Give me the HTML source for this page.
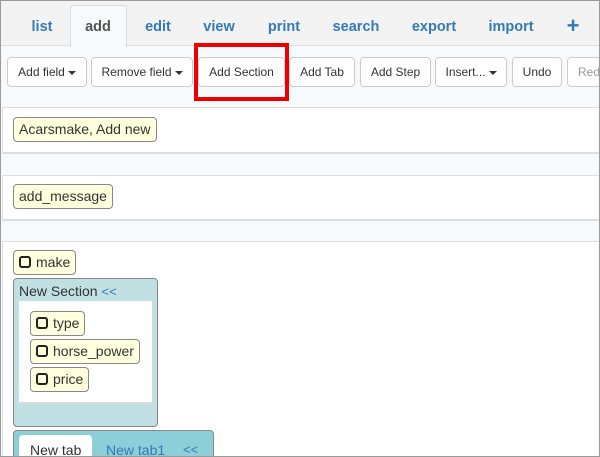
<!DOCTYPE html><html style="overflow:hidden;width:600px;height:457px"><head><style>
*{box-sizing:border-box;margin:0;padding:0}
body{width:600px;height:457px;overflow:hidden;font-family:"Liberation Sans",sans-serif;font-size:13px;color:#333;position:relative;background:#f7fafd}
.frame{position:absolute;left:0;top:0;width:600px;height:457px;border:1px solid #9a9a9a;pointer-events:none;z-index:10}
.a{position:absolute}
.tabbar{left:0;top:0;width:600px;height:46px;background:#f3f3f3;border-bottom:1px solid #ddd}
.t{position:absolute;top:19px;font-weight:bold;font-size:14.5px;color:#337ab7;transform:translateX(-50%)}
.act{left:70px;top:5px;width:57px;height:42px;background:#f7fafd;border:1px solid #ddd;border-bottom:none;border-radius:4px 4px 0 0}
.b{position:absolute;top:57px;height:30px;border:1px solid #ccc;border-radius:4px;background:#fff;font-size:12px;line-height:28px;text-align:center;color:#333}
.c{display:inline-block;width:0;height:0;border-left:4px solid transparent;border-right:4px solid transparent;border-top:4px solid #333;vertical-align:middle;margin-left:3px}
.p{position:absolute;left:2px;width:598px;background:#fff;border-top:1px solid #ddd;border-left:1px solid #ddd;border-bottom:2px solid #ddd}
.f{position:absolute;height:25px;background:#ffffdd;border:1px solid #888;border-radius:4px;font-size:14px;line-height:23px;padding:0 5px;white-space:nowrap}
.cb{display:inline-block;width:12px;height:12px;border:2.5px solid #222;border-radius:3px;vertical-align:-1px;margin-right:5px}
</style></head><body>
<div class="a tabbar"></div>
<div class="a act"></div>
<span class="t" style="left:42px">list</span>
<span class="t" style="left:98px;color:#555">add</span>
<span class="t" style="left:158px">edit</span>
<span class="t" style="left:219px">view</span>
<span class="t" style="left:284px">print</span>
<span class="t" style="left:356px">search</span>
<span class="t" style="left:434px">export</span>
<span class="t" style="left:511px">import</span>
<span class="t" style="left:573px;top:13px;font-size:22px">+</span>
<div class="b" style="left:7px;width:80px">Add field<span class="c"></span></div>
<div class="b" style="left:91px;width:102px">Remove field<span class="c"></span></div>
<div class="b" style="left:198px;width:87px">Add Section</div>
<div class="b" style="left:289px;width:66px">Add Tab</div>
<div class="b" style="left:360px;width:71px">Add Step</div>
<div class="b" style="left:435px;width:72px">Insert...<span class="c"></span></div>
<div class="b" style="left:512px;width:50px">Undo</div>
<div class="b" style="left:567px;width:50px;color:#999;text-align:left;padding-left:10px">Redo</div>
<div class="a" style="left:194px;top:43px;width:95px;height:58px;border:4px solid #e00"></div>
<div class="p" style="top:107px;height:47px"></div>
<div class="f" style="left:13px;top:117px">Acarsmake, Add new</div>
<div class="p" style="top:175px;height:46px"></div>
<div class="f" style="left:13px;top:184px">add_message</div>
<div class="p" style="top:241px;height:216px;border-bottom:none"></div>
<div class="f" style="left:13px;top:250px"><span class="cb"></span>make</div>
<div class="a" style="left:13px;top:278px;width:145px;height:149px;background:#c0e0e3;border:1px solid #888;border-radius:4px"></div>
<div class="a" style="left:19px;top:283px;font-size:14px">New Section <span style="color:#337ab7;font-size:13px">&lt;&lt;</span></div>
<div class="a" style="left:19px;top:301px;width:133px;height:103px;background:#fff;border-bottom:2px solid #ddd"></div>
<div class="f" style="left:30px;top:311px"><span class="cb"></span>type</div>
<div class="f" style="left:30px;top:339px"><span class="cb"></span>horse_power</div>
<div class="f" style="left:30px;top:367px"><span class="cb"></span>price</div>
<div class="a" style="left:13px;top:430px;width:201px;height:27px;background:#8ccfd8;border:1px solid #888;border-bottom:none;border-radius:4px 4px 0 0"></div>
<div class="a" style="left:19px;top:435px;width:73px;height:22px;background:#fff;border-radius:4px 4px 0 0;font-size:14px;padding:7px 0 0 11px">New tab</div>
<div class="a" style="left:106px;top:442px;font-size:14px;color:#337ab7">New tab1</div>
<div class="a" style="left:183px;top:442px;font-size:13px;color:#337ab7">&lt;&lt;</div>
<div class="frame"></div>
</body></html>
